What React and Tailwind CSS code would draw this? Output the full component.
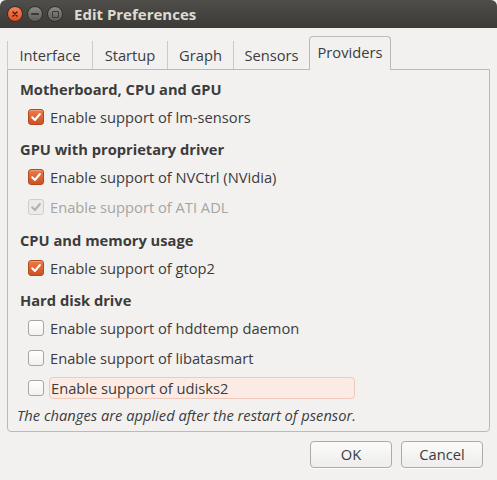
import React from "react";

function CheckMark({ color }) {
  return (
    <svg width="12" height="12" viewBox="0 0 12 12" className="block">
      <path d="M2.2 6.3 L4.9 9 L9.9 3" fill="none" stroke={color} strokeWidth="2" strokeLinecap="round" strokeLinejoin="round" />
    </svg>
  );
}

function Check({ state }) {
  if (state === "on") {
    return (
      <div className="w-4 h-4 rounded-[3px] border border-[#b04a1e] bg-gradient-to-b from-[#ef7a45] to-[#cc5222] flex items-center justify-center shadow-[inset_0_1px_0_rgba(255,255,255,0.25)]">
        <CheckMark color="#ffffff" />
      </div>
    );
  }
  if (state === "disabled") {
    return (
      <div className="w-4 h-4 rounded-[3px] border border-[#cfcdc9] bg-[#ecebe9] flex items-center justify-center">
        <CheckMark color="#b3b1ad" />
      </div>
    );
  }
  return <div className="w-4 h-4 rounded-[3px] border border-[#a9a6a1] bg-gradient-to-b from-[#ffffff] to-[#f2f1ef]" />;
}

function Row({ state, label, focus }) {
  const disabled = state === "disabled";
  return (
    <div className="h-[30px] flex items-center pl-[20px]">
      <Check state={state} />
      {focus ? (
        <div className="ml-[5px] w-[306px] h-[22px] rounded-[4px] border border-[#efc9ba] bg-[#fcebe4] flex items-center pl-[1px]">
          <span>{label}</span>
        </div>
      ) : (
        <span className={"ml-[6px] " + (disabled ? "text-[#a6a5a1]" : "")}>{label}</span>
      )}
    </div>
  );
}

function Heading({ children, mt }) {
  return <div className={"h-[26px] flex items-center pl-[12px] font-bold " + mt}>{children}</div>;
}

export default function App() {
  return (
    <div className="w-[497px] h-[480px] bg-[#f2f1f0] flex flex-col text-[#3c3c3c] text-[14.7px] font-['Open_Sans',sans-serif]">
      <div className="h-[28px] shrink-0 bg-gradient-to-b from-[#4f4e4a] to-[#3b3a36] rounded-t-[6px] flex items-center">
        <div className="flex items-center gap-[4px] pl-[7px]">
          <div className="w-4 h-4 rounded-full bg-gradient-to-b from-[#f5845a] to-[#de4b1c] border border-[#3a2a24] flex items-center justify-center">
            <svg width="8" height="8" viewBox="0 0 8 8"><path d="M2 2 L6 6 M6 2 L2 6" stroke="#3a1a10" strokeWidth="1.4" strokeLinecap="round" /></svg>
          </div>
          <div className="w-4 h-4 rounded-full bg-gradient-to-b from-[#8a8984] to-[#5e5d59] border border-[#302f2c] flex items-center justify-center">
            <div className="w-[8px] h-[2px] bg-[#3a3936] rounded-full" />
          </div>
          <div className="w-4 h-4 rounded-full bg-gradient-to-b from-[#8a8984] to-[#5e5d59] border border-[#302f2c] flex items-center justify-center">
            <div className="w-[7px] h-[7px] border-[1.5px] border-[#3a3936] rounded-[1px]" />
          </div>
        </div>
        <div className="ml-[11px] font-bold text-[15px] text-[#dfdbd2]">Edit Preferences</div>
      </div>

      <div className="px-[7px] pt-[7px]">
        <div className="flex items-end h-[34px]">
          <div className="h-[28px] w-[85px] border-l border-[#cdcac6] flex items-center justify-center">Interface</div>
          <div className="h-[28px] w-[75px] border-l border-[#cdcac6] flex items-center justify-center">Startup</div>
          <div className="h-[28px] w-[66px] border-l border-[#cdcac6] flex items-center justify-center">Graph</div>
          <div className="h-[28px] w-[76px] border-l border-[#cdcac6] flex items-center justify-center">Sensors</div>
          <div className="h-[34px] w-[82px] border border-b-0 border-[#bdbab5] rounded-t-[4px] bg-[#f2f1f0] flex items-center justify-center -mb-px relative z-10 pb-[2px]">Providers</div>
        </div>
        <div className="h-[363px] border border-[#bdbab5] rounded-b-[4px] flex flex-col pt-[6px]">
          <Heading mt="">Motherboard, CPU and GPU</Heading>
          <Row state="on" label="Enable support of lm-sensors" />
          <Heading mt="mt-[4px]">GPU with proprietary driver</Heading>
          <Row state="on" label="Enable support of NVCtrl (NVidia)" />
          <Row state="disabled" label="Enable support of ATI ADL" />
          <Heading mt="mt-[5px]">CPU and memory usage</Heading>
          <Row state="on" label="Enable support of gtop2" />
          <Heading mt="mt-[4px]">Hard disk drive</Heading>
          <Row state="off" label="Enable support of hddtemp daemon" />
          <Row state="off" label="Enable support of libatasmart" />
          <Row state="off" label="Enable support of udisks2" focus />
          <div className="h-[24px] flex items-center pl-[9px] italic">The changes are applied after the restart of psensor.</div>
        </div>
      </div>

      <div className="flex justify-end gap-[9px] pr-[14px] pt-[9px]">
        <button className="w-[82px] h-[27px] rounded-[4px] border border-[#aeaba6] bg-gradient-to-b from-[#fbfbfa] to-[#eeedeb] shadow-[0_1px_0_rgba(255,255,255,0.8)] flex items-center justify-center">OK</button>
        <button className="w-[82px] h-[27px] rounded-[4px] border border-[#aeaba6] bg-gradient-to-b from-[#fbfbfa] to-[#eeedeb] shadow-[0_1px_0_rgba(255,255,255,0.8)] flex items-center justify-center">Cancel</button>
      </div>
    </div>
  );
}
